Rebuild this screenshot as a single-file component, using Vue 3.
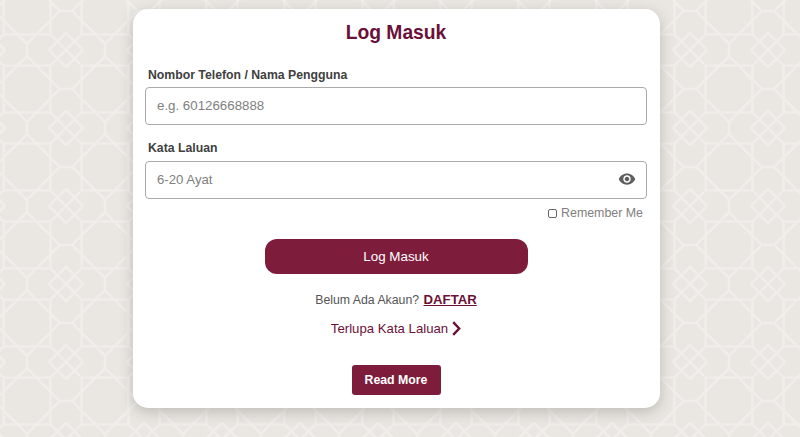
<script setup>
const tile = 'M20 20 H80 V80 H20 Z M50 8 L92 50 L50 92 L8 50 Z M0 0 L20 20 M100 0 L80 20 M0 100 L20 80 M100 100 L80 80 M50 0 V8 M50 92 V100 M0 50 H8 M92 50 H100 M0 22 L22 0 M78 0 L100 22 M0 78 L22 100 M78 100 L100 78'
</script>

<template>
  <div class="page">
    <svg class="backdrop" width="800" height="437" aria-hidden="true">
      <defs>
        <pattern id="lattice" width="100" height="100" patternUnits="userSpaceOnUse" patternTransform="translate(-12 -28) scale(0.78)">
          <path :d="tile" fill="none" stroke="#f0eeeb" stroke-width="3" />
        </pattern>
      </defs>
      <rect width="800" height="437" fill="url(#lattice)" />
    </svg>
    <main class="card">
      <h1 class="title">Log Masuk</h1>
      <label class="label first">Nombor Telefon / Nama Pengguna</label>
      <div class="field"><span class="placeholder large">e.g. 60126668888</span></div>
      <label class="label second">Kata Laluan</label>
      <div class="field">
        <span class="placeholder">6-20 Ayat</span>
        <svg class="eye" width="18" height="18" viewBox="0 0 24 24" aria-hidden="true">
          <path fill="#5f5f5f" d="M12 4.5C7 4.5 2.73 7.61 1 12c1.73 4.39 6 7.5 11 7.5s9.27-3.11 11-7.5c-1.73-4.39-6-7.5-11-7.5zM12 17c-2.76 0-5-2.24-5-5s2.24-5 5-5 5 2.24 5 5-2.24 5-5 5zm0-8c-1.66 0-3 1.34-3 3s1.34 3 3 3 3-1.34 3-3-1.34-3-3-3z" />
        </svg>
      </div>
      <div class="remember"><span class="box"></span><span>Remember Me</span></div>
      <button class="submit" type="button">Log Masuk</button>
      <p class="signup">Belum Ada Akaun? <a class="daftar">DAFTAR</a></p>
      <p class="forgot">
        <span>Terlupa Kata Laluan</span>
        <svg width="9" height="15" viewBox="0 0 9 15" aria-hidden="true"><path d="M1.2 1.2 7.2 7.5l-6 6.3" fill="none" stroke="#6b1038" stroke-width="2.4" /></svg>
      </p>
      <button class="more" type="button">Read More</button>
    </main>
  </div>
</template>

<style scoped>
.page {
  position: relative;
  height: 437px;
  overflow: hidden;
  background: #eae7e3;
  font-family: "Liberation Sans", Arial, sans-serif;
  padding-top: 9px;
  box-sizing: border-box;
}
.backdrop {
  position: absolute;
  inset: 0;
}
.card {
  position: relative;
  width: 527px;
  height: 399px;
  margin-left: 133px;
  box-sizing: border-box;
  padding: 12px 13px 0 12px;
  background: #fff;
  border-radius: 15px;
  box-shadow: 0 4px 14px rgba(90, 85, 75, 0.3);
  display: flex;
  flex-direction: column;
}
.title {
  margin: 0;
  height: 24px;
  line-height: 24px;
  font-size: 19.3px;
  font-weight: 700;
  color: #6b1038;
  text-align: center;
}
.label {
  display: block;
  height: 14px;
  line-height: 14px;
  padding-left: 3px;
  font-size: 12.25px;
  font-weight: 700;
  color: #404040;
}
.label.first { margin-top: 23px; margin-bottom: 5px; }
.label.second { margin-top: 16px; margin-bottom: 6px; }
.field {
  height: 38px;
  box-sizing: border-box;
  border: 1px solid #aaa;
  border-radius: 4px;
  padding: 0 11px;
  display: flex;
  align-items: center;
  justify-content: space-between;
}
.placeholder {
  font-size: 13.2px;
  line-height: 16px;
  margin-top: -1px;
  color: #808080;
}
.placeholder.large { font-size: 13.3px; }
.eye { margin-right: -1px; margin-top: -2px; }
.remember {
  margin-top: 7px;
  height: 14px;
  padding-right: 4px;
  display: flex;
  justify-content: flex-end;
  align-items: center;
  gap: 4px;
  font-size: 12.4px;
  line-height: 14px;
  color: #808080;
}
.box {
  width: 7px;
  height: 7px;
  border: 1px solid #666;
  border-radius: 2px;
}
.submit {
  align-self: center;
  margin-top: 19px;
  width: 263px;
  height: 35px;
  border: 0;
  border-radius: 12px;
  background: #7e1c3c;
  color: #fff;
  font: 13.4px "Liberation Sans", Arial, sans-serif;
}
.signup {
  margin: 18px 0 0;
  height: 16px;
  line-height: 16px;
  font-size: 12.3px;
  color: #555;
  text-align: center;
}
.daftar {
  margin-left: 1px;
  font-size: 13.2px;
  font-weight: 700;
  color: #6b1038;
  text-decoration: underline;
}
.forgot {
  margin: 12px 0 0;
  height: 16px;
  display: flex;
  justify-content: center;
  align-items: center;
  gap: 4px;
  font-size: 13.2px;
  color: #6b1038;
}
.more {
  align-self: center;
  margin-top: 29px;
  width: 89px;
  height: 30px;
  border: 0;
  border-radius: 3px;
  background: #7e1c3c;
  color: #fff;
  font: 700 12.3px "Liberation Sans", Arial, sans-serif;
}
</style>
